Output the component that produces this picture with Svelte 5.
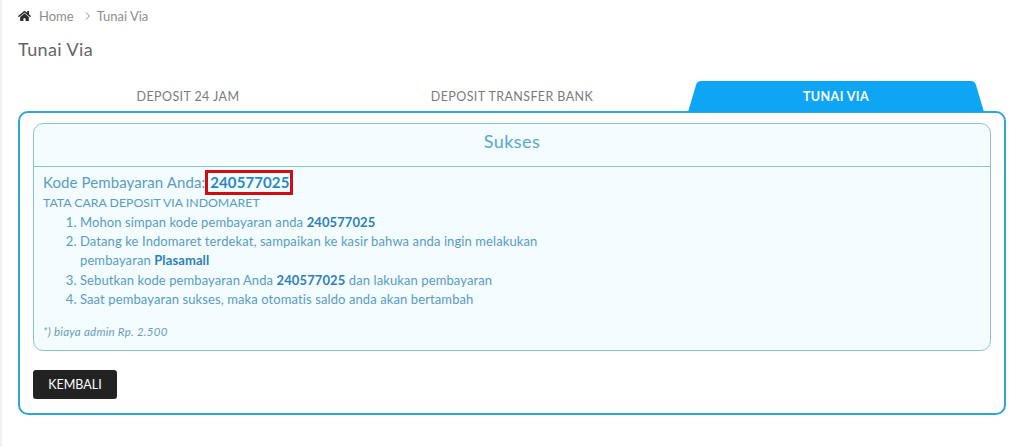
<script lang="ts">
  const kode = '240577025';
  const tabs = ['DEPOSIT 24 JAM', 'DEPOSIT TRANSFER BANK', 'TUNAI VIA'];
  let aktif = $state(2);
</script>

<div class="halaman">
  <nav class="crumb">
    <svg class="home" viewBox="0 0 576 512" aria-hidden="true">
      <path d="M280.4 148.3 96 300.1V464a16 16 0 0 0 16 16l112-.3a16 16 0 0 0 15.9-16V368a16 16 0 0 1 16-16h64a16 16 0 0 1 16 16v95.6a16 16 0 0 0 16 16l112 .4a16 16 0 0 0 16-16V300L295.7 148.3a12.2 12.2 0 0 0-15.3 0zM571.6 251.5 488 182.6V44.1a12 12 0 0 0-12-12h-56a12 12 0 0 0-12 12v72.6L318.5 43a48 48 0 0 0-61 0L4.3 251.5a12 12 0 0 0-1.6 16.9l25.5 31A12 12 0 0 0 45.2 301l235.2-193.7a12.2 12.2 0 0 1 15.3 0L530.9 301a12 12 0 0 0 16.9-1.6l25.5-31a12 12 0 0 0-1.7-16.9z" />
    </svg>
    <span>Home</span>
    <svg class="panah" viewBox="0 0 8 10" aria-hidden="true"><path d="M2 1.5 5.5 5 2 8.5" /></svg>
    <span>Tunai Via</span>
  </nav>

  <h1>Tunai Via</h1>

  <ul class="tabs">
    {#each tabs as tab, i}
      <li class="tab" class:aktif={i === aktif}>
        {#if i === aktif}
          <svg class="bentuk" viewBox="0 0 296 31" preserveAspectRatio="none" aria-hidden="true">
            <path d="M0 31 8 4Q9 0 13 0H283Q287 0 288 4L296 31Z" />
          </svg>
        {/if}
        <button onclick={() => (aktif = i)}>{tab}</button>
      </li>
    {/each}
  </ul>

  <section class="kotak">
    <div class="alert">
      <h2>Sukses</h2>
      <div class="isi">
        <p class="kode">Kode Pembayaran Anda: <strong>{kode}</strong></p>
        <p class="judul">TATA CARA DEPOSIT VIA INDOMARET</p>
        <ol>
          <li>Mohon simpan kode pembayaran anda <b>{kode}</b></li>
          <li>Datang ke Indomaret terdekat, sampaikan ke kasir bahwa anda ingin melakukan<br />pembayaran <b>Plasamall</b></li>
          <li>Sebutkan kode pembayaran Anda <b>{kode}</b> dan lakukan pembayaran</li>
          <li>Saat pembayaran sukses, maka otomatis saldo anda akan bertambah</li>
        </ol>
        <p class="catatan">*) biaya admin Rp. 2.500</p>
      </div>
    </div>
    <button class="kembali">KEMBALI</button>
  </section>
</div>

<style>
  :global(body) {
    margin: 0;
    background: #fff;
    font-family: 'Lato', 'Open Sans', sans-serif;
  }

  .halaman {
    height: 447px;
    box-sizing: border-box;
    padding: 8px 18px 0 16px;
    overflow: hidden;
    border-left: 2px solid #f1f1f1;
  }

  .crumb {
    display: flex;
    align-items: center;
    height: 15px;
    font-size: 13px;
    color: #8d8d8d;
  }

  .home {
    width: 13px;
    height: 12px;
    fill: #2b2b2b;
    margin-right: 8px;
  }

  .panah {
    width: 8px;
    height: 10px;
    margin: 0 5px 0 10px;
    fill: none;
    stroke: #8d8d8d;
    stroke-width: 1;
  }

  h1 {
    margin: 15px 0 0;
    font-size: 18px;
    line-height: 22px;
    font-weight: 400;
    letter-spacing: 0.4px;
    color: #666;
  }

  .tabs {
    list-style: none;
    display: grid;
    grid-template-columns: repeat(3, 324px);
    margin: 21px 0 0;
    padding: 0 8px;
    height: 30px;
  }

  .tab {
    position: relative;
  }

  .tab button {
    position: relative;
    width: 100%;
    height: 30px;
    border: 0;
    padding: 0;
    background: none;
    font: inherit;
    font-size: 12.5px;
    letter-spacing: 0.4px;
    color: #7b7b7b;
    cursor: pointer;
  }

  .bentuk {
    position: absolute;
    left: 14px;
    top: 0;
    width: 296px;
    height: 31px;
    fill: #0ea5f5;
    z-index: 1;
  }

  .tab.aktif button {
    color: #fff;
    font-weight: 700;
    z-index: 2;
  }

  .kotak {
    height: 304px;
    box-sizing: border-box;
    padding: 10px 13px 0;
    border: 2px solid #2fa6d6;
    border-radius: 10px;
  }

  .alert {
    height: 228px;
    box-sizing: border-box;
    border: 1px solid #8fc1d6;
    border-radius: 10px;
    background: #f3fcff;
    color: #5a9bc2;
  }

  h2 {
    margin: 0;
    height: 43px;
    box-sizing: border-box;
    border-bottom: 1px solid #8fc1d6;
    text-align: center;
    font-size: 18px;
    line-height: 35px;
    font-weight: 400;
    letter-spacing: 0.4px;
    color: #5aa6cd;
  }

  .isi {
    padding: 3px 9px 0;
  }

  p {
    margin: 0;
  }

  .kode {
    font-size: 15px;
    line-height: 22px;
    letter-spacing: 0.1px;
  }

  .kode strong {
    display: inline-block;
    margin-left: -4px;
    padding: 0 1px 0 2px;
    line-height: 19px;
    border: 3px solid #d00d12;
    color: #2a86c4;
    font-weight: 700;
  }

  .judul {
    margin-top: -1px;
    font-size: 12.3px;
    line-height: 17px;
  }

  ol {
    margin: 2px 0 0;
    padding-left: 37px;
    font-size: 13px;
    line-height: 19.2px;
    letter-spacing: 0.1px;
  }

  b {
    color: #2f7fb8;
    font-weight: 700;
  }

  .catatan {
    margin-top: 16px;
    font-size: 11.5px;
    line-height: 14px;
    letter-spacing: 0.25px;
    font-style: italic;
    color: #6b9db9;
  }

  .kembali {
    display: block;
    width: 84px;
    height: 29px;
    margin-top: 19px;
    padding: 0;
    border: 0;
    border-radius: 3px;
    background: #222;
    color: #fff;
    font: inherit;
    font-size: 12.5px;
    cursor: pointer;
  }
</style>
